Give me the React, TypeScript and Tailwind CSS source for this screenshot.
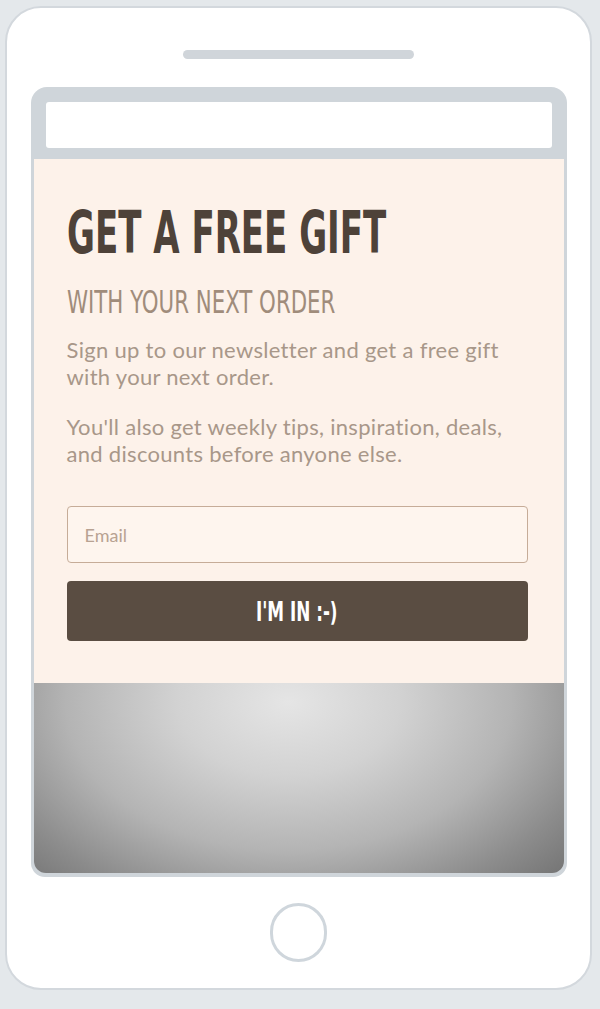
import { useState } from "react"

const narrow = "font-['DejaVu_Sans_Condensed','DejaVu_Sans',sans-serif]"

function PhoneScreen() {
  const [email, setEmail] = useState("")

  return (
    <div className="mt-[28px] w-[536px] rounded-t-[16px] rounded-b-[14px] bg-[#cfd5da] px-[3px] pb-[4px]">
      {/* browser bar */}
      <div className="px-[12px] pt-[15px] pb-[11px]">
        <div className="h-[46px] rounded-[3px] bg-white" />
      </div>

      {/* signup card */}
      <div className="bg-[#fdf2ea] pl-[33px] pr-[36px] pt-[44px] pb-[42px]">
        <h1 className={`${narrow} origin-left scale-x-[0.652] whitespace-nowrap text-[58px] leading-[60px] font-bold text-[#4e4239]`}>
          GET A FREE GIFT
        </h1>
        <h2 className={`${narrow} mt-[21px] origin-left scale-x-[0.74] whitespace-nowrap text-[32px] leading-[36px] text-[#a08c7b]`}>
          WITH YOUR NEXT ORDER
        </h2>
        <div className="mt-[16px] font-['Lato',sans-serif] text-[22px] leading-[27px] tracking-[0.3px] text-[#a89789]">
          <p>Sign up to our newsletter and get a free gift with your next order.</p>
          <p className="mt-[23px]">You'll also get weekly tips, inspiration, deals, and discounts before anyone else.</p>
        </div>
        <input
          value={email}
          onChange={(e) => setEmail(e.target.value)}
          placeholder="Email"
          className="mt-[39px] block h-[57px] w-full rounded-[4px] border-[1.5px] border-[#c6ac98] bg-[#fef5ee] px-[17px] font-['Lato',sans-serif] text-[18px] text-[#5a4c41] outline-none placeholder:text-[#b8a292]"
        />
        <button className="mt-[18px] flex h-[60px] w-full items-center justify-center rounded-[4px] bg-[#5a4d42]">
          <span className={`${narrow} mt-[2px] scale-x-[0.72] text-[26px] font-bold text-white`}>I'M IN :-)</span>
        </button>
      </div>

      {/* hero photo placeholder */}
      <div className="h-[190px] rounded-b-[12px] bg-[radial-gradient(ellipse_70%_130%_at_48%_10%,#e5e5e5_0%,#d2d2d2_30%,#b4b4b4_60%,#8c8c8c_85%,#777777_100%)]" />
    </div>
  )
}

export default function App() {
  return (
    <div className="min-h-screen bg-[#e4e8eb] pt-[6px] pl-[5px]">
      <div className="flex h-[984px] w-[587px] flex-col items-center rounded-[36px] border-2 border-[#d3d8dd] bg-white">
        <div className="mt-[42px] h-[9px] w-[231px] rounded-full bg-[#d0d5da]" />
        <PhoneScreen />
        <div className="mt-[26px] h-[59px] w-[57px] rounded-full border-[3px] border-[#cfd6dc]" />
      </div>
    </div>
  )
}
